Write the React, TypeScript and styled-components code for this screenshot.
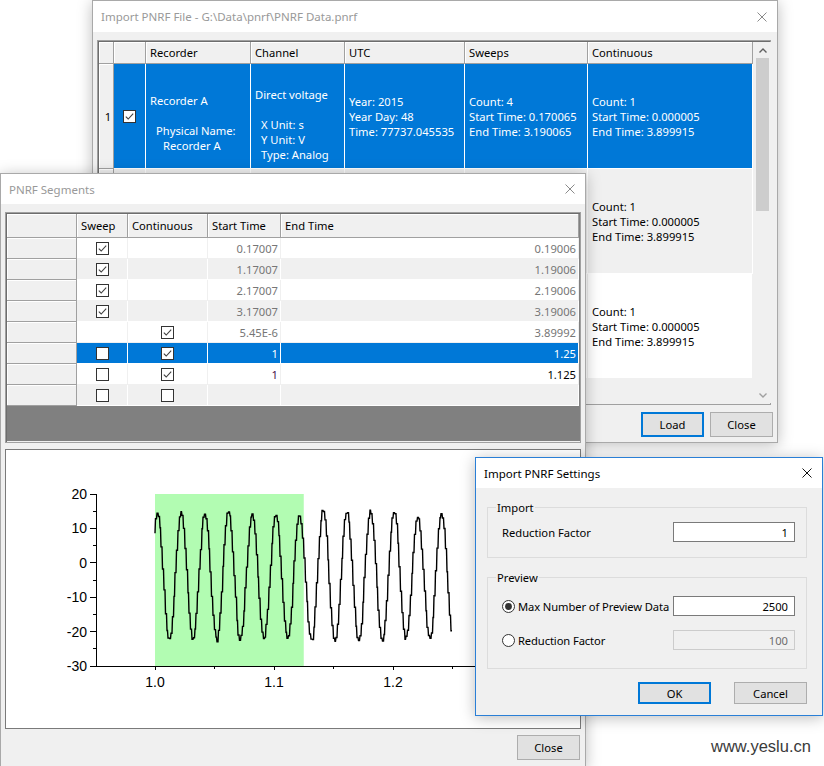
import React from "react";
import styled, { createGlobalStyle } from "styled-components";

const UI_FONT = `"Noto Sans", "Segoe UI", "Liberation Sans", sans-serif`;

const GlobalStyle = createGlobalStyle`
  html, body { margin: 0; padding: 0; background: #fff; }
  body { font-family: ${UI_FONT}; font-size: 11.2px; color: #000; }
  * { box-sizing: border-box; }
`;

const Desktop = styled.div`
  position: relative;
  width: 824px;
  height: 766px;
  overflow: hidden;
  background: #fff;
`;

// windows on the desktop are placed by their coordinates
const Window = styled.div<{ $x: number; $y: number; $w: number; $h: number; $active?: boolean }>`
  position: absolute;
  left: ${(p) => p.$x}px;
  top: ${(p) => p.$y}px;
  width: ${(p) => p.$w}px;
  height: ${(p) => p.$h}px;
  display: flex;
  flex-direction: column;
  background: #f0f0f0;
  border: 1px solid ${(p) => (p.$active ? "#2a7fd6" : "#a9a9a9")};
  box-shadow: 0 2px 14px rgba(0, 0, 0, 0.26);
`;

const TitleBar = styled.div<{ $h: number; $active?: boolean; $pad: number }>`
  flex: none;
  height: ${(p) => p.$h}px;
  background: #fff;
  display: flex;
  align-items: center;
  justify-content: space-between;
  padding-left: ${(p) => p.$pad}px;
  padding-right: 10px;
  color: ${(p) => (p.$active ? "#000" : "#999")};
  font-size: 11.5px;
  line-height: 15px;
  white-space: nowrap;
`;

const CloseX = ({ active }: { active?: boolean }) => (
  <svg width="10" height="10" viewBox="0 0 10 10">
    <path d="M0.5 0.5 L9.5 9.5 M9.5 0.5 L0.5 9.5" stroke={active ? "#111" : "#8a8a8a"} strokeWidth="1" fill="none" />
  </svg>
);

const Body = styled.div<{ $pad: string }>`
  flex: 1;
  display: flex;
  flex-direction: column;
  padding: ${(p) => p.$pad};
  min-height: 0;
`;

const Footer = styled.div<{ $top: number; $gap: number; $right: number }>`
  display: flex;
  justify-content: flex-end;
  gap: ${(p) => p.$gap}px;
  margin-top: ${(p) => p.$top}px;
  margin-right: ${(p) => p.$right}px;
`;

const Button = styled.div<{ $w: number; $h: number; $default?: boolean }>`
  width: ${(p) => p.$w}px;
  height: ${(p) => p.$h}px;
  display: flex;
  align-items: center;
  justify-content: center;
  background: #e1e1e1;
  border: ${(p) => (p.$default ? "2px solid #0078d7" : "1px solid #adadad")};
  color: #000;
`;

/* ---------- check boxes and radios ---------- */

const Box = styled.span`
  display: inline-flex;
  width: 13px;
  height: 13px;
  border: 1px solid #333;
  background: #fff;
`;

const CheckBox = ({ checked }: { checked: boolean }) => (
  <Box>
    {checked && (
      <svg width="11" height="11" viewBox="0 0 11 11">
        <path d="M1.8 5.6 L4.2 8 L9.2 2.6" stroke="#404040" strokeWidth="1.1" fill="none" />
      </svg>
    )}
  </Box>
);

const Radio = ({ on }: { on: boolean }) => (
  <svg width="13" height="13" viewBox="0 0 13 13">
    <circle cx="6.5" cy="6.5" r="6" fill="#fff" stroke="#333" strokeWidth="1" />
    {on && <circle cx="6.5" cy="6.5" r="3.4" fill="#333" />}
  </svg>
);

/* ---------- shared grid parts ---------- */

const GridFrame = styled.div<{ $h: number }>`
  display: flex;
  height: ${(p) => p.$h}px;
  border: 1px solid #a0a0a0;
  box-shadow: inset 1px 1px 0 #6d6d6d;
  padding: 1px 0 1px 1px;
  background: #f0f0f0;
  flex: none;
`;

const Table = styled.div<{ $fill: string }>`
  display: flex;
  flex-direction: column;
  flex: 1;
  background: ${(p) => p.$fill};
`;

const Row = styled.div`
  display: flex;
  flex: none;
`;

const HeadCell = styled.div<{ $w: number; $h: number }>`
  width: ${(p) => p.$w}px;
  height: ${(p) => p.$h}px;
  flex: none;
  background: #f0f0f0;
  border-right: 1px solid #a0a0a0;
  border-bottom: 1px solid #a0a0a0;
  box-shadow: inset 1px 1px 0 #fff;
  padding-left: 4px;
  display: flex;
  align-items: center;
  justify-content: ${(p) => (p.$w < 20 ? "center" : "flex-start")};
  white-space: nowrap;
`;

type Tone = "white" | "gray" | "sel";

const bgOf = (t: Tone) => (t === "sel" ? "#0078d7" : t === "gray" ? "#f0f0f0" : "#fff");
const lineOf = (t: Tone) => (t === "white" ? "#f0f0f0" : "#fff");

const Cell = styled.div<{
  $w: number;
  $h: number;
  $tone: Tone;
  $align?: "left" | "right" | "center";
  $color?: string;
  $top?: number;
}>`
  width: ${(p) => p.$w}px;
  height: ${(p) => p.$h}px;
  flex: none;
  background: ${(p) => bgOf(p.$tone)};
  border-right: 1px solid ${(p) => lineOf(p.$tone)};
  border-bottom: 1px solid ${(p) => lineOf(p.$tone)};
  color: ${(p) => (p.$tone === "sel" ? "#fff" : p.$color || "#000")};
  display: flex;
  flex-direction: column;
  justify-content: ${(p) => (p.$top !== undefined ? "flex-start" : "center")};
  padding-top: ${(p) => p.$top ?? 0}px;
  align-items: ${(p) => (p.$align === "right" ? "flex-end" : p.$align === "center" ? "center" : "flex-start")};
  padding-left: ${(p) => (p.$align === "left" ? 4 : 0)}px;
  padding-right: ${(p) => (p.$align === "right" ? 2 : 0)}px;
  line-height: 15px;
  white-space: pre;
`;

const Line = styled.div<{ $indent?: number }>`
  padding-left: ${(p) => p.$indent ?? 0}px;
  min-height: 15px;
`;

/* ---------- Import PNRF File window ---------- */

const FILE_COLS = [15, 32, 105, 94, 120, 123, 165];

type TextLine = [string, number?];
type FileRow = {
  n: string;
  tone: Tone;
  checked: boolean;
  cells: { lines: TextLine[]; top?: number }[];
};

const continuousLines: TextLine[] = [["Count: 1"], ["Start Time: 0.000005"], ["End Time: 3.899915"]];

// rows 2 and 3 are only visible in their last column; the rest lies under the segments window
const fileRows: FileRow[] = [
  {
    n: "1",
    tone: "sel",
    checked: true,
    cells: [
      { lines: [["Recorder A"], [""], ["Physical Name:", 6], ["Recorder A", 13]], top: 29 },
      { lines: [["Direct voltage"], [""], ["X Unit: s", 6], ["Y Unit: V", 6], ["Type: Analog", 6]], top: 23 },
      { lines: [["Year: 2015"], ["Year Day: 48"], ["Time: 77737.045535"]] },
      { lines: [["Count: 4"], ["Start Time: 0.170065"], ["End Time: 3.190065"]] },
      { lines: continuousLines },
    ],
  },
  {
    n: "",
    tone: "gray",
    checked: false,
    cells: [{ lines: [] }, { lines: [] }, { lines: [] }, { lines: [] }, { lines: continuousLines }],
  },
  {
    n: "",
    tone: "white",
    checked: false,
    cells: [{ lines: [] }, { lines: [] }, { lines: [] }, { lines: [] }, { lines: continuousLines }],
  },
];

const ScrollBar = styled.div`
  width: 17px;
  flex: none;
  margin-left: 1px;
  display: flex;
  flex-direction: column;
  background: #f0f0f0;
`;

const ScrollArrow = styled.div`
  height: 16px;
  flex: none;
  display: flex;
  align-items: center;
  justify-content: center;
`;

const ScrollThumb = styled.div`
  height: 153px;
  margin: 0 2px;
  background: #cdcdcd;
  flex: none;
`;

const ScrollTrack = styled.div`
  flex: 1;
`;

const Chevron = ({ up }: { up?: boolean }) => (
  <svg width="8" height="5" viewBox="0 0 8 5">
    <path d={up ? "M0.5 4.5 L4 1 L7.5 4.5" : "M0.5 0.5 L4 4 L7.5 0.5"} stroke={up ? "#606060" : "#a0a0a0"} strokeWidth="1.4" fill="none" />
  </svg>
);

const ImportFileWindow = () => (
  <Window $x={92} $y={0} $w={686} $h={443}>
    <TitleBar $h={31} $pad={8}>
      <span>Import PNRF File - G:\Data\pnrf\PNRF Data.pnrf</span>
      <CloseX />
    </TitleBar>
    <Body $pad="8px 6px 0 4px">
      <GridFrame $h={365}>
        <Table $fill="#f0f0f0">
          <Row>
            <HeadCell $w={FILE_COLS[0]} $h={22} />
            <HeadCell $w={FILE_COLS[1]} $h={22} />
            {["Recorder", "Channel", "UTC", "Sweeps", "Continuous"].map((h, i) => (
              <HeadCell key={h} $w={FILE_COLS[i + 2]} $h={22}>
                {h}
              </HeadCell>
            ))}
          </Row>
          {fileRows.map((r, k) => (
            <Row key={k}>
              <HeadCell $w={FILE_COLS[0]} $h={105}>
                {r.n}
              </HeadCell>
              <Cell $w={FILE_COLS[1]} $h={105} $tone={r.tone} $align="center">
                {r.checked && <CheckBox checked />}
              </Cell>
              {r.cells.map((c, i) => (
                <Cell key={i} $w={FILE_COLS[i + 2]} $h={105} $tone={r.tone} $align="left" $top={c.top}>
                  {c.lines.map(([t, ind], j) => (
                    <Line key={j} $indent={ind}>
                      {t}
                    </Line>
                  ))}
                </Cell>
              ))}
            </Row>
          ))}
        </Table>
        <ScrollBar>
          <ScrollArrow>
            <Chevron up />
          </ScrollArrow>
          <ScrollThumb />
          <ScrollTrack />
          <ScrollArrow>
            <Chevron />
          </ScrollArrow>
        </ScrollBar>
      </GridFrame>
      <Footer $top={7} $gap={6} $right={-2}>
        <Button $w={63} $h={25} $default>
          Load
        </Button>
        <Button $w={63} $h={25}>
          Close
        </Button>
      </Footer>
    </Body>
  </Window>
);

/* ---------- PNRF Segments window ---------- */

const SEG_COLS = [70, 51, 80, 73, 298];

type SegRow = {
  sweep: boolean | null;
  cont: boolean | null;
  start: string;
  end: string;
  startColor: string;
  endColor: string;
  selected?: boolean;
};

const MUTED = "#767676";

const segRows: SegRow[] = [
  { sweep: true, cont: null, start: "0.17007", end: "0.19006", startColor: MUTED, endColor: MUTED },
  { sweep: true, cont: null, start: "1.17007", end: "1.19006", startColor: MUTED, endColor: MUTED },
  { sweep: true, cont: null, start: "2.17007", end: "2.19006", startColor: MUTED, endColor: MUTED },
  { sweep: true, cont: null, start: "3.17007", end: "3.19006", startColor: MUTED, endColor: MUTED },
  { sweep: null, cont: true, start: "5.45E-6", end: "3.89992", startColor: MUTED, endColor: MUTED },
  { sweep: false, cont: true, start: "1", end: "1.25", startColor: "#000", endColor: "#000", selected: true },
  { sweep: false, cont: true, start: "1", end: "1.125", startColor: "#4a0a4a", endColor: "#000" },
  { sweep: false, cont: false, start: "", end: "", startColor: "#000", endColor: "#000" },
];

const ChartPanel = styled.div`
  height: 280px;
  margin-top: 6px;
  flex: none;
  background: #fff;
  border: 1px solid #7a7a7a;
  display: flex;
`;

const AXIS_FONT = `"Liberation Sans", Arial, sans-serif`;

const yOf = (v: number) => 494 + (20 - v) * 3.44;
const xOf = (t: number) => 155 + (t - 1) * 1190;

const rnd = (i: number) => {
  const s = Math.sin(i * 12.9898 + 78.233) * 43758.5453;
  return s - Math.floor(s);
};

const wavePoints = () => {
  const pts: string[] = [];
  const period = 23.67;
  for (let i = 0; i <= 594; i++) {
    const x = 155 + i * 0.5;
    const stepX = Math.floor(x / 1.4) * 1.4;
    const phase = (2 * Math.PI * (stepX - 157)) / period;
    const cycle = Math.floor((stepX - 157 + period / 2) / period);
    const amp = 63 + (rnd(cycle + 11) - 0.5) * 7;
    const y = 576.5 - amp * Math.cos(phase) + (rnd(Math.floor(x / 1.4)) - 0.5) * 3;
    pts.push(`${x.toFixed(1)},${y.toFixed(1)}`);
  }
  return pts.join(" ");
};

const WAVE = wavePoints();

const Chart = () => {
  const majorY = [20, 10, 0, -10, -20, -30];
  const minorY = [15, 5, -5, -15, -25];
  const majorX = [1.0, 1.1, 1.2, 1.3];
  const minorX = [1.05, 1.15, 1.25];
  return (
    <svg width="574" height="278" viewBox="6 450 574 278">
      <rect x={xOf(1)} y={yOf(20)} width={xOf(1.125) - xOf(1)} height={yOf(-30) - yOf(20)} fill="#b2fcb2" />
      <polyline points={WAVE} fill="none" stroke="#000" strokeWidth="1.4" strokeLinejoin="miter" />
      <g stroke="#000" strokeWidth="1" shapeRendering="crispEdges">
        <line x1="96" y1={yOf(20)} x2="96" y2={yOf(-30)} />
        <line x1="96" y1={yOf(-30)} x2={xOf(1.3)} y2={yOf(-30)} />
        {majorY.map((v) => (
          <line key={v} x1="90" y1={yOf(v)} x2="96" y2={yOf(v)} />
        ))}
        {minorY.map((v) => (
          <line key={v} x1="93" y1={yOf(v)} x2="96" y2={yOf(v)} />
        ))}
        {majorX.map((t) => (
          <line key={t} x1={xOf(t)} y1={yOf(-30)} x2={xOf(t)} y2={yOf(-30) + 4} />
        ))}
        {minorX.map((t) => (
          <line key={t} x1={xOf(t)} y1={yOf(-30)} x2={xOf(t)} y2={yOf(-30) + 3} />
        ))}
      </g>
      <g fontFamily={AXIS_FONT} fontSize="14" fill="#000">
        {majorY.map((v) => (
          <text key={v} x="87" y={yOf(v) + 5} textAnchor="end">
            {v}
          </text>
        ))}
        {majorX.map((t) => (
          <text key={t} x={xOf(t)} y="687" textAnchor="middle">
            {t.toFixed(1)}
          </text>
        ))}
      </g>
    </svg>
  );
};

const SegmentsWindow = () => (
  <Window $x={0} $y={173} $w={586} $h={596}>
    <TitleBar $h={30} $pad={8}>
      <span>PNRF Segments</span>
      <CloseX />
    </TitleBar>
    <Body $pad="8px 4px 0 4px">
      <GridFrame $h={231}>
        <Table $fill="#808080">
          <Row>
            <HeadCell $w={SEG_COLS[0]} $h={24} />
            {["Sweep", "Continuous", "Start Time", "End Time"].map((h, i) => (
              <HeadCell key={h} $w={SEG_COLS[i + 1]} $h={24}>
                {h}
              </HeadCell>
            ))}
          </Row>
          {segRows.map((r, i) => {
            const tone: Tone = r.selected ? "sel" : i % 2 ? "gray" : "white";
            return (
              <Row key={i}>
                <HeadCell $w={SEG_COLS[0]} $h={21} />
                <Cell $w={SEG_COLS[1]} $h={21} $tone={tone} $align="center">
                  {r.sweep !== null && <CheckBox checked={r.sweep} />}
                </Cell>
                <Cell $w={SEG_COLS[2]} $h={21} $tone={tone} $align="center">
                  {r.cont !== null && <CheckBox checked={r.cont} />}
                </Cell>
                <Cell $w={SEG_COLS[3]} $h={21} $tone={tone} $align="right" $color={r.startColor}>
                  {r.start}
                </Cell>
                <Cell $w={SEG_COLS[4]} $h={21} $tone={tone} $align="right" $color={r.endColor}>
                  {r.end}
                </Cell>
              </Row>
            );
          })}
        </Table>
      </GridFrame>
      <ChartPanel>
        <Chart />
      </ChartPanel>
      <Footer $top={6} $gap={6} $right={1}>
        <Button $w={63} $h={25}>
          Close
        </Button>
      </Footer>
    </Body>
  </Window>
);

/* ---------- Import PNRF Settings dialog ---------- */

const Group = styled.div<{ $top: number; $bottom: number }>`
  margin: ${(p) => p.$top}px 15px 0 11px;
  border: 1px solid #dcdcdc;
  padding: 0 11px ${(p) => p.$bottom}px 14px;
  display: flex;
  flex-direction: column;
`;

const Legend = styled.div`
  width: fit-content;
  margin: -8px 0 0 -6px;
  padding: 0 1px;
  background: #f0f0f0;
  line-height: 15px;
`;

const FieldRow = styled.div<{ $top: number }>`
  display: flex;
  align-items: center;
  justify-content: space-between;
  margin-top: ${(p) => p.$top}px;
  height: 20px;
  white-space: nowrap;
`;

const RadioLabel = styled.div`
  display: flex;
  align-items: center;
  gap: 3px;
  letter-spacing: -0.1px;
`;

const NumberInput = styled.div<{ $disabled?: boolean }>`
  width: 122px;
  height: 20px;
  flex: none;
  border: 1px solid ${(p) => (p.$disabled ? "#cccccc" : "#7a7a7a")};
  background: ${(p) => (p.$disabled ? "#f0f0f0" : "#fff")};
  color: ${(p) => (p.$disabled ? "#6d6d6d" : "#000")};
  display: flex;
  align-items: center;
  justify-content: flex-end;
  padding-right: 6px;
`;

const SettingsDialog = () => (
  <Window $x={475} $y={457} $w={348} $h={259} $active>
    <TitleBar $h={30} $pad={8} $active>
      <span>Import PNRF Settings</span>
      <CloseX active />
    </TitleBar>
    <Body $pad="0 0 0 0">
      <Group $top={19} $bottom={15}>
        <Legend>Import</Legend>
        <FieldRow $top={7}>
          <span>Reduction Factor</span>
          <NumberInput>1</NumberInput>
        </FieldRow>
      </Group>
      <Group $top={19} $bottom={18}>
        <Legend>Preview</Legend>
        <FieldRow $top={11}>
          <RadioLabel>
            <Radio on />
            <span>Max Number of Preview Data</span>
          </RadioLabel>
          <NumberInput>2500</NumberInput>
        </FieldRow>
        <FieldRow $top={14}>
          <RadioLabel>
            <Radio on={false} />
            <span>Reduction Factor</span>
          </RadioLabel>
          <NumberInput $disabled>100</NumberInput>
        </FieldRow>
      </Group>
      <Footer $top={13} $gap={23} $right={15}>
        <Button $w={73} $h={22} $default>
          OK
        </Button>
        <Button $w={73} $h={22}>
          Cancel
        </Button>
      </Footer>
    </Body>
  </Window>
);

const Watermark = styled.div`
  position: absolute;
  left: 711px;
  top: 735px;
  font-family: "Liberation Sans", Arial, sans-serif;
  font-size: 16.5px;
  color: #3a3a3a;
  line-height: 22px;
`;

export default function App() {
  return (
    <>
      <GlobalStyle />
      <Desktop>
        <ImportFileWindow />
        <SegmentsWindow />
        <SettingsDialog />
        <Watermark>www.yeslu.cn</Watermark>
      </Desktop>
    </>
  );
}
